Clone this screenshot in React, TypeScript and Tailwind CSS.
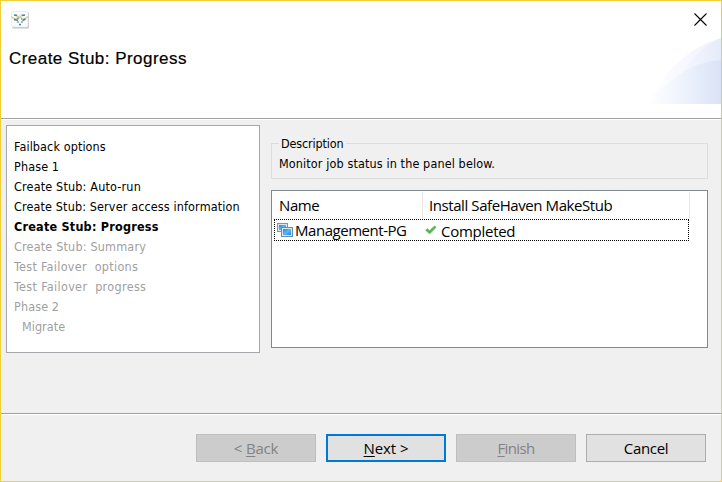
import type { ReactNode } from "react";

const steps = [
  { label: "Failback options", style: "text-black tracking-[0.1px]" },
  { label: "Phase 1", style: "text-black tracking-[0.12px]" },
  { label: "Create Stub: Auto-run", style: "text-black tracking-[0.17px]" },
  { label: "Create Stub: Server access information", style: "text-black tracking-[0.13px]" },
  { label: "Create Stub: Progress", style: "font-bold text-black tracking-[0.22px]" },
  { label: "Create Stub: Summary", style: "text-[#a0a0a0] tracking-[0.18px]" },
  { label: "Test Failover  options", style: "text-[#a0a0a0] tracking-[0.3px]" },
  { label: "Test Failover  progress", style: "text-[#a0a0a0] tracking-[0.33px]" },
  { label: "Phase 2", style: "text-[#a0a0a0] tracking-[0.12px]" },
  { label: "Migrate", style: "pl-2 text-[#a0a0a0] tracking-[0.05px]" },
];

const small = "font-['DejaVu_Sans_Condensed','DejaVu_Sans',sans-serif] [font-stretch:condensed] text-[12.5px] leading-5 whitespace-pre";
const large = "font-['Open_Sans','Noto_Sans',sans-serif] text-[15px] leading-5 whitespace-pre";

function AppIcon() {
  return (
    <svg width="20" height="20" viewBox="0 0 20 20" fill="none">
      <rect x="2" y="2" width="17" height="16.500" rx="1.500" fill="#c4c4c4" />
      <rect x="1.500" y="1.500" width="16.500" height="15.500" rx="1.500" fill="#fafafa" stroke="#e4e6e8" strokeWidth=".6" />
      <path d="M1 6.500c2 2 5 3 7 1 1-2 2-2 3 0s4 2 7-1M6 5c2 0 1 3 4 3M12 4l-2 4" stroke="#cbd09a" strokeWidth="1.200" />
      <path d="M4 5l3 .5M12 5.500l3-.5M4 9.500l4 .8M15.500 9l-3 1.500M7.500 11.500l1 1M11.500 12.500l1-1M9 14.500h2" stroke="#4280a2" strokeWidth="1.400" />
      <path d="M7 8.500h2M11 9h1" stroke="#80a9bd" strokeWidth="1.500" />
    </svg>
  );
}

function Swoosh() {
  return (
    <svg width="74" height="67" viewBox="0 0 74 67">
      <defs>
        <linearGradient id="pale" x1="0" x2="1">
          <stop stopColor="#fff" />
          <stop offset="1" stopColor="#edf2fc" />
        </linearGradient>
        <linearGradient id="mid" x1="0" x2="1">
          <stop stopColor="#f6f8fe" />
          <stop offset="1" stopColor="#e5ebf9" />
        </linearGradient>
        <linearGradient id="deep" x1="0" x2="1">
          <stop stopColor="#fff" />
          <stop offset=".4" stopColor="#f1f5fd" />
          <stop offset="1" stopColor="#dae3f6" />
        </linearGradient>
      </defs>
      <path d="M0 67C16 35 42 10 74 1v66z" fill="url(#pale)" />
      <path d="M33 40C42 24 56 8 74 1v50z" fill="url(#mid)" />
      <path d="M0 67C20 43 46 24 74 23v44z" fill="url(#deep)" />
    </svg>
  );
}

function ServersIcon() {
  return (
    <svg width="16" height="15" viewBox="0 0 16 15">
      <defs>
        <linearGradient id="screen" x1="0" y1="0" x2="1" y2="1">
          <stop stopColor="#1c86e0" />
          <stop offset=".5" stopColor="#5cb6fa" />
          <stop offset="1" stopColor="#1684e4" />
        </linearGradient>
      </defs>
      <rect x=".5" y=".5" width="10" height="8" fill="#dbe7ef" stroke="#7795ac" />
      <rect x="2" y="2" width="7" height="5" fill="url(#screen)" />
      <rect x="4.500" y="4.500" width="11" height="9" fill="#dbe7ef" stroke="#6b8aa3" />
      <rect x="6" y="6" width="8" height="6" fill="url(#screen)" />
    </svg>
  );
}

function Check() {
  return (
    <svg width="12" height="10" viewBox="0 0 12 10">
      <path d="M.5 5.200 2.400 3.600 4.500 5.500 9.700.8l1.500 1.400L4.700 9z" fill="#50b64b" stroke="#83c77f" strokeWidth=".6" />
    </svg>
  );
}

function Button({ children, style }: { children: ReactNode; style: string }) {
  return <button className={`${large} flex h-7 w-[120px] items-center justify-center pb-px ${style}`}>{children}</button>;
}

function Key({ children }: { children: string }) {
  return <span className="underline decoration-1 underline-offset-2">{children}</span>;
}

export default function App() {
  return (
    <div className="flex h-[482px] w-[722px] flex-col overflow-hidden border border-[#f0d033] bg-[#f0f0f0] text-black">
      <header className="flex h-[117px] shrink-0 justify-between bg-white">
        <div className="pt-[9px] pl-2">
          <div className="pl-px"><AppIcon /></div>
          <h1 className="mt-[19px] font-['Liberation_Sans',Arial,sans-serif] text-[17px] leading-5 tracking-[0.46px] whitespace-nowrap [-webkit-text-stroke:0.2px_black]">Create Stub: Progress</h1>
        </div>
        <div className="flex flex-col items-end">
          <svg className="mt-3 mr-[14px]" width="13" height="13" viewBox="0 0 13 13">
            <path d="M.5.5l12 12M12.500.5l-12 12" stroke="#000" strokeWidth="1.100" />
          </svg>
          <div className="mt-[11px]"><Swoosh /></div>
        </div>
      </header>
      <div className="h-0.5 shrink-0 border-t border-[#a0a0a0] bg-white" />
      <main className="flex h-[293px] shrink-0 gap-[11px] pt-[5px] pl-[5px]">
        <nav className="h-[228px] w-[254px] border border-[#a7a6aa] bg-white pt-[11px] pl-[7px]">
          {steps.map((step) => (
            <div key={step.label} className={`${small} ${step.style}`}>{step.label}</div>
          ))}
        </nav>
        <section className="w-[437px] pt-[9px]">
          <fieldset className="h-[45px] border border-[#dcdcdc] px-[7px]">
            <legend className={`${small} h-[19px] px-0.5 tracking-[-0.14px]`}>Description</legend>
            <p className={`${small} pt-px tracking-[0.12px]`}>Monitor job status in the panel below.</p>
          </fieldset>
          <div className="mt-[11px] h-[158px] border border-[#828790] bg-white">
            <div className="flex h-[27px] pt-px">
              <div className={`${large} w-[151px] border-r border-[#e5e5e5] pt-[3px] pl-[7px] tracking-[-0.4px]`}>Name</div>
              <div className={`${large} w-[267px] border-r border-[#e5e5e5] pt-[3px] pl-1.5 tracking-[-0.42px]`}>Install SafeHaven MakeStub</div>
            </div>
            <div className={`${large} mt-px ml-0.5 flex h-[22px] w-[415px] border border-dotted border-black`}>
              <div className="flex w-[148px] pl-0.5">
                <div className="mr-0.5 pt-[3px]"><ServersIcon /></div>
                <span className="tracking-[-0.46px]">Management-PG</span>
              </div>
              <div className="flex pl-0.5">
                <div className="mr-1 pt-[5px]"><Check /></div>
                <span className="pt-px tracking-[-0.27px]">Completed</span>
              </div>
            </div>
          </div>
        </section>
      </main>
      <footer className="flex grow justify-end gap-2.5 border-t border-[#a0a0a0] pr-[15px] shadow-[inset_0_1px_0_white] pt-5">
        <Button style="border border-[#bfbfbf] bg-[#cccccc] px-1.5 text-[#838383] tracking-[-0.2px]">{"< "}<Key>B</Key>ack</Button>
        <Button style="border-2 border-[#0078d7] bg-[#e1e1e1] px-1.5 tracking-[-0.1px]"><Key>N</Key>{"ext >"}</Button>
        <Button style="border border-[#bfbfbf] bg-[#cccccc] px-1.5 text-[#838383] tracking-[-0.65px]"><Key>F</Key>inish</Button>
        <Button style="border border-[#adadad] bg-[#e1e1e1] tracking-[-0.35px]">Cancel</Button>
      </footer>
    </div>
  );
}
